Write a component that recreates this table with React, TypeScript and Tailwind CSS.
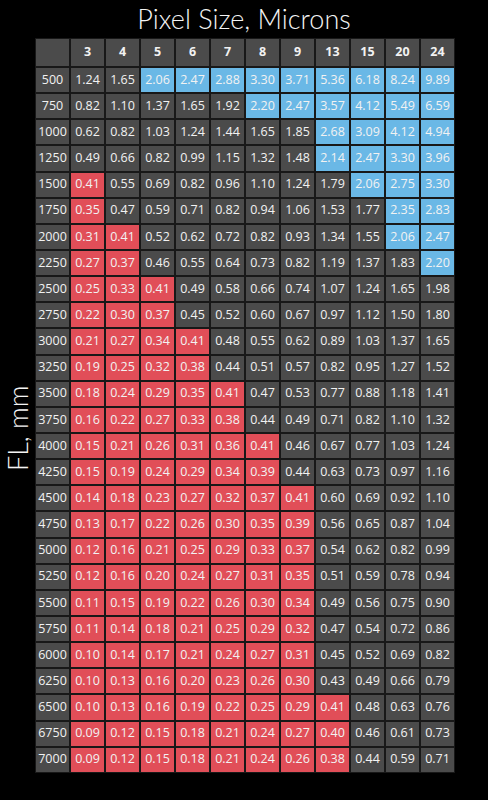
import { Fragment } from "react";

const cols = ["3", "4", "5", "6", "7", "8", "9", "13", "15", "20", "24"];

const rows: [string, string[]][] = [
  ["500", ["1.24", "1.65", "2.06", "2.47", "2.88", "3.30", "3.71", "5.36", "6.18", "8.24", "9.89"]],
  ["750", ["0.82", "1.10", "1.37", "1.65", "1.92", "2.20", "2.47", "3.57", "4.12", "5.49", "6.59"]],
  ["1000", ["0.62", "0.82", "1.03", "1.24", "1.44", "1.65", "1.85", "2.68", "3.09", "4.12", "4.94"]],
  ["1250", ["0.49", "0.66", "0.82", "0.99", "1.15", "1.32", "1.48", "2.14", "2.47", "3.30", "3.96"]],
  ["1500", ["0.41", "0.55", "0.69", "0.82", "0.96", "1.10", "1.24", "1.79", "2.06", "2.75", "3.30"]],
  ["1750", ["0.35", "0.47", "0.59", "0.71", "0.82", "0.94", "1.06", "1.53", "1.77", "2.35", "2.83"]],
  ["2000", ["0.31", "0.41", "0.52", "0.62", "0.72", "0.82", "0.93", "1.34", "1.55", "2.06", "2.47"]],
  ["2250", ["0.27", "0.37", "0.46", "0.55", "0.64", "0.73", "0.82", "1.19", "1.37", "1.83", "2.20"]],
  ["2500", ["0.25", "0.33", "0.41", "0.49", "0.58", "0.66", "0.74", "1.07", "1.24", "1.65", "1.98"]],
  ["2750", ["0.22", "0.30", "0.37", "0.45", "0.52", "0.60", "0.67", "0.97", "1.12", "1.50", "1.80"]],
  ["3000", ["0.21", "0.27", "0.34", "0.41", "0.48", "0.55", "0.62", "0.89", "1.03", "1.37", "1.65"]],
  ["3250", ["0.19", "0.25", "0.32", "0.38", "0.44", "0.51", "0.57", "0.82", "0.95", "1.27", "1.52"]],
  ["3500", ["0.18", "0.24", "0.29", "0.35", "0.41", "0.47", "0.53", "0.77", "0.88", "1.18", "1.41"]],
  ["3750", ["0.16", "0.22", "0.27", "0.33", "0.38", "0.44", "0.49", "0.71", "0.82", "1.10", "1.32"]],
  ["4000", ["0.15", "0.21", "0.26", "0.31", "0.36", "0.41", "0.46", "0.67", "0.77", "1.03", "1.24"]],
  ["4250", ["0.15", "0.19", "0.24", "0.29", "0.34", "0.39", "0.44", "0.63", "0.73", "0.97", "1.16"]],
  ["4500", ["0.14", "0.18", "0.23", "0.27", "0.32", "0.37", "0.41", "0.60", "0.69", "0.92", "1.10"]],
  ["4750", ["0.13", "0.17", "0.22", "0.26", "0.30", "0.35", "0.39", "0.56", "0.65", "0.87", "1.04"]],
  ["5000", ["0.12", "0.16", "0.21", "0.25", "0.29", "0.33", "0.37", "0.54", "0.62", "0.82", "0.99"]],
  ["5250", ["0.12", "0.16", "0.20", "0.24", "0.27", "0.31", "0.35", "0.51", "0.59", "0.78", "0.94"]],
  ["5500", ["0.11", "0.15", "0.19", "0.22", "0.26", "0.30", "0.34", "0.49", "0.56", "0.75", "0.90"]],
  ["5750", ["0.11", "0.14", "0.18", "0.21", "0.25", "0.29", "0.32", "0.47", "0.54", "0.72", "0.86"]],
  ["6000", ["0.10", "0.14", "0.17", "0.21", "0.24", "0.27", "0.31", "0.45", "0.52", "0.69", "0.82"]],
  ["6250", ["0.10", "0.13", "0.16", "0.20", "0.23", "0.26", "0.30", "0.43", "0.49", "0.66", "0.79"]],
  ["6500", ["0.10", "0.13", "0.16", "0.19", "0.22", "0.25", "0.29", "0.41", "0.48", "0.63", "0.76"]],
  ["6750", ["0.09", "0.12", "0.15", "0.18", "0.21", "0.24", "0.27", "0.40", "0.46", "0.61", "0.73"]],
  ["7000", ["0.09", "0.12", "0.15", "0.18", "0.21", "0.24", "0.26", "0.38", "0.44", "0.59", "0.71"]],
];

// under-sampled / over-sampled colouring
const cellBg = (v: string) => {
  const n = parseFloat(v);
  if (n <= 0.41) return "bg-[#e14e58]";
  if (n >= 2.0) return "bg-[#6ab8e6]";
  return "bg-[#4b4b4b]";
};

const Cell = ({ children, className }: { children?: React.ReactNode; className: string }) => (
  <div className={`flex items-center justify-center text-[12.5px] text-[#f2f2f2] ${className}`}>
    {children}
  </div>
);

const App = () => {
  return (
    <div
      className="w-[488px] h-[800px] bg-black flex flex-col overflow-hidden"
      style={{ fontFamily: '"Open Sans", "Liberation Sans", sans-serif' }}
    >
      <h1
        className="h-[38px] pt-[3px] text-center text-[27px] leading-[31px] font-light text-[#f4f4f4]"
        style={{ fontFamily: 'Lato, "Open Sans", sans-serif' }}
      >
        Pixel Size, Microns
      </h1>
      <div className="flex">
        <div className="w-[35px] flex items-center justify-center pt-[46px]">
          <span
            className="-rotate-90 whitespace-nowrap text-[27px] font-light text-[#f4f4f4]"
            style={{ fontFamily: 'Lato, "Open Sans", sans-serif' }}
          >
            FL, mm
          </span>
        </div>
        <div className="grid grid-cols-[repeat(12,33px)] grid-rows-[27px_repeat(27,24.15px)] gap-[2px] p-[1px] bg-[#181818]">
          <Cell className="bg-[#4b4b4b]" />
          {cols.map((c) => (
            <Cell key={c} className="bg-[#4b4b4b] font-bold">
              {c}
            </Cell>
          ))}
          {rows.map(([fl, vals]) => (
            <Fragment key={fl}>
              <Cell className="bg-[#4b4b4b] font-medium">{fl}</Cell>
              {vals.map((v, i) => (
                <Cell key={i} className={`${cellBg(v)} font-medium`}>
                  {v}
                </Cell>
              ))}
            </Fragment>
          ))}
        </div>
      </div>
    </div>
  );
};

export default App;
